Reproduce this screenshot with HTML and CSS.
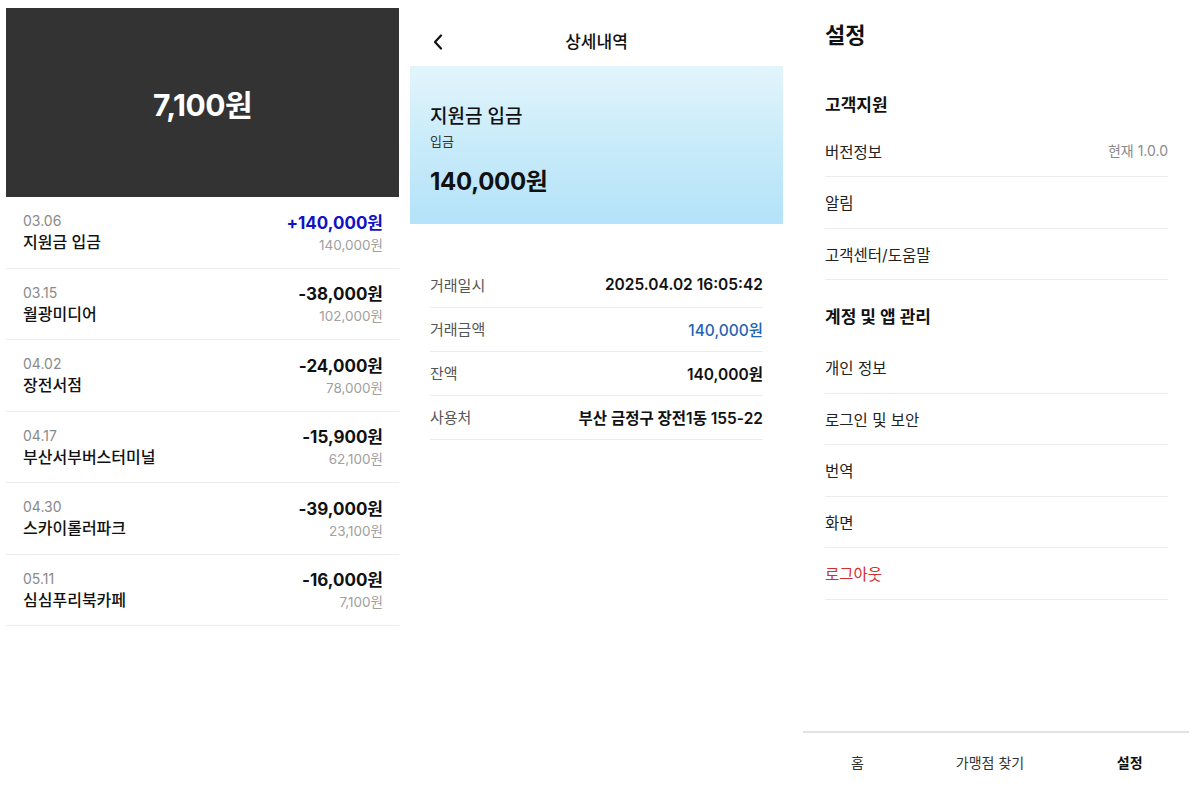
FILE: index.html
```html
<!DOCTYPE html>
<html lang="ko">
<head>
<meta charset="utf-8">
<link rel="stylesheet" href="styles.css">
</head>
<body>
<div class="screens">
  <section class="panel home">
    <div class="balance">7,100원</div>
    <ul class="tx-list">
      <li class="tx"><div class="tx-left"><span class="tx-date">03.06</span><span class="tx-name">지원금 입금</span></div><div class="tx-right"><span class="tx-amt plus">+140,000원</span><span class="tx-bal">140,000원</span></div></li>
      <li class="tx"><div class="tx-left"><span class="tx-date">03.15</span><span class="tx-name">월광미디어</span></div><div class="tx-right"><span class="tx-amt">-38,000원</span><span class="tx-bal">102,000원</span></div></li>
      <li class="tx"><div class="tx-left"><span class="tx-date">04.02</span><span class="tx-name">장전서점</span></div><div class="tx-right"><span class="tx-amt">-24,000원</span><span class="tx-bal">78,000원</span></div></li>
      <li class="tx"><div class="tx-left"><span class="tx-date">04.17</span><span class="tx-name">부산서부버스터미널</span></div><div class="tx-right"><span class="tx-amt">-15,900원</span><span class="tx-bal">62,100원</span></div></li>
      <li class="tx"><div class="tx-left"><span class="tx-date">04.30</span><span class="tx-name">스카이롤러파크</span></div><div class="tx-right"><span class="tx-amt">-39,000원</span><span class="tx-bal">23,100원</span></div></li>
      <li class="tx"><div class="tx-left"><span class="tx-date">05.11</span><span class="tx-name">심심푸리북카페</span></div><div class="tx-right"><span class="tx-amt">-16,000원</span><span class="tx-bal">7,100원</span></div></li>
    </ul>
  </section>

  <section class="panel detail">
    <header class="detail-head">
      <svg class="back" width="12" height="16" viewBox="0 0 12 16"><path d="M9 1.5 L3 8 L9 14.5" fill="none" stroke="#111" stroke-width="2.2" stroke-linecap="round" stroke-linejoin="round"/></svg>
      <h1 class="detail-title">상세내역</h1>
    </header>
    <div class="detail-card">
      <div class="card-title">지원금 입금</div>
      <div class="card-sub">입금</div>
      <div class="card-amt">140,000원</div>
    </div>
    <dl class="info">
      <div class="info-row"><dt>거래일시</dt><dd>2025.04.02 16:05:42</dd></div>
      <div class="info-row"><dt>거래금액</dt><dd class="blue">140,000원</dd></div>
      <div class="info-row"><dt>잔액</dt><dd>140,000원</dd></div>
      <div class="info-row"><dt>사용처</dt><dd>부산 금정구 장전1동 155-22</dd></div>
    </dl>
  </section>

  <section class="panel settings">
    <div class="settings-body">
      <h1 class="settings-title">설정</h1>
      <h2 class="group-title first">고객지원</h2>
      <ul class="menu">
        <li class="menu-item"><span>버전정보</span><span class="version">현재 1.0.0</span></li>
        <li class="menu-item"><span>알림</span></li>
        <li class="menu-item"><span>고객센터/도움말</span></li>
      </ul>
      <h2 class="group-title">계정 및 앱 관리</h2>
      <ul class="menu">
        <li class="menu-item"><span>개인 정보</span></li>
        <li class="menu-item"><span>로그인 및 보안</span></li>
        <li class="menu-item"><span>번역</span></li>
        <li class="menu-item"><span>화면</span></li>
        <li class="menu-item logout"><span>로그아웃</span></li>
      </ul>
    </div>
    <nav class="tabbar">
      <span class="tab">홈</span>
      <span class="tab">가맹점 찾기</span>
      <span class="tab active">설정</span>
    </nav>
  </section>
</div>
</body>
</html>
```

FILE: styles.css
```css
* { box-sizing: border-box; }
html, body { margin: 0; padding: 0; background: #fff; }
body {
  font-family: "Inter", "Noto Sans CJK KR", "Noto Sans", sans-serif;
  color: #111;
  width: 1192px;
  height: 799px;
  overflow: hidden;
}
ul, dl, dd { margin: 0; padding: 0; list-style: none; }
h1, h2 { margin: 0; }

.screens {
  display: flex;
  height: 799px;
}

/* ---------- left: home ---------- */
.home {
  width: 393px;
  margin-left: 6px;
  padding-top: 8px;
}
.balance {
  height: 189px;
  background: #333333;
  color: #fff;
  display: flex;
  align-items: center;
  justify-content: center;
  font-size: 30px;
  font-weight: 700;
  letter-spacing: -0.5px;
}
.tx {
  height: 71.5px;
  display: flex;
  justify-content: space-between;
  align-items: center;
  padding: 0 16px 0 17px;
  border-bottom: 1.5px solid #ececec;
}
.tx-left, .tx-right {
  display: flex;
  flex-direction: column;
}
.tx-right { align-items: flex-end; padding-top: 3px; }
.tx-date {
  font-size: 14px;
  color: #8a8a8a;
  line-height: 20px;
}
.tx-name {
  font-size: 16px;
  font-weight: 500;
  line-height: 22px;
  color: #111;
}
.tx-amt {
  font-size: 17px;
  font-weight: 700;
  line-height: 22px;
  color: #111;
}
.tx-amt.plus { color: #1212c4; }
.tx-bal {
  font-size: 13.5px;
  color: #a0a0a0;
  line-height: 22px;
}

/* ---------- middle: detail ---------- */
.detail {
  width: 373px;
  margin-left: 11px;
}
.detail-head {
  height: 66px;
  display: flex;
  justify-content: center;
  position: relative;
  padding-top: 30px;
}
.back {
  position: absolute;
  left: 22px;
  top: 34px;
}
.detail-title {
  font-size: 17px;
  font-weight: 500;
  line-height: 24px;
}
.detail-card {
  height: 158px;
  background: linear-gradient(180deg, #e3f5fb 0%, #c8ebfa 50%, #b4e2f9 100%);
  padding: 38px 20px 0;
}
.card-title {
  font-size: 19px;
  font-weight: 500;
  line-height: 26px;
}
.card-sub {
  font-size: 13px;
  color: #333;
  line-height: 22px;
}
.card-amt {
  font-size: 24px;
  font-weight: 700;
  line-height: 30px;
  margin-top: 15px;
  letter-spacing: -0.3px;
}
.info {
  margin: 40px 20px 0;
}
.info-row {
  height: 44px;
  display: flex;
  justify-content: space-between;
  align-items: center;
  border-bottom: 1.5px solid #ececec;
  padding-bottom: 2px;
}
.info-row dt {
  font-size: 15px;
  color: #555;
}
.info-row dd {
  font-size: 15.5px;
  font-weight: 600;
  color: #111;
}
.info-row dd.blue {
  color: #1f63b3;
  font-weight: 500;
}

/* ---------- right: settings ---------- */
.settings {
  width: 386px;
  margin-left: 20px;
  display: flex;
  flex-direction: column;
}
.settings-body {
  flex: 1;
  padding: 0 21px 0 22px;
}
.settings-title {
  font-size: 22px;
  font-weight: 700;
  line-height: 32px;
  margin-top: 19px;
}
.group-title {
  font-size: 17px;
  font-weight: 700;
  line-height: 24px;
  margin-top: 42px;
  margin-bottom: 11px;
}
.group-title:not(.first) {
  margin-top: 25px;
  margin-bottom: 13px;
}
.menu-item {
  height: 51.5px;
  display: flex;
  justify-content: space-between;
  align-items: center;
  border-bottom: 1.5px solid #ececec;
  font-size: 15.5px;
  color: #222;
}
.menu:first-of-type .menu-item:first-child { height: 49px; align-items: flex-start; padding-top: 12px; }
.version {
  font-size: 14px;
  color: #8a8a8a;
}
.logout { color: #d32f2f; }

.tabbar {
  height: 68px;
  border-top: 2px solid #e2e2e2;
  display: grid;
  grid-template-columns: 1fr 1fr 1fr;
  align-items: center;
  padding: 0 0 8px 0;
}
.tab {
  text-align: center;
  font-size: 14px;
  color: #333;
}
.tab:first-child { padding-right: 20px; }
.tab:nth-child(2) { padding-right: 12px; }
.tab:last-child { padding-left: 10px; }
.tab.active { font-weight: 700; color: #111; }
```
